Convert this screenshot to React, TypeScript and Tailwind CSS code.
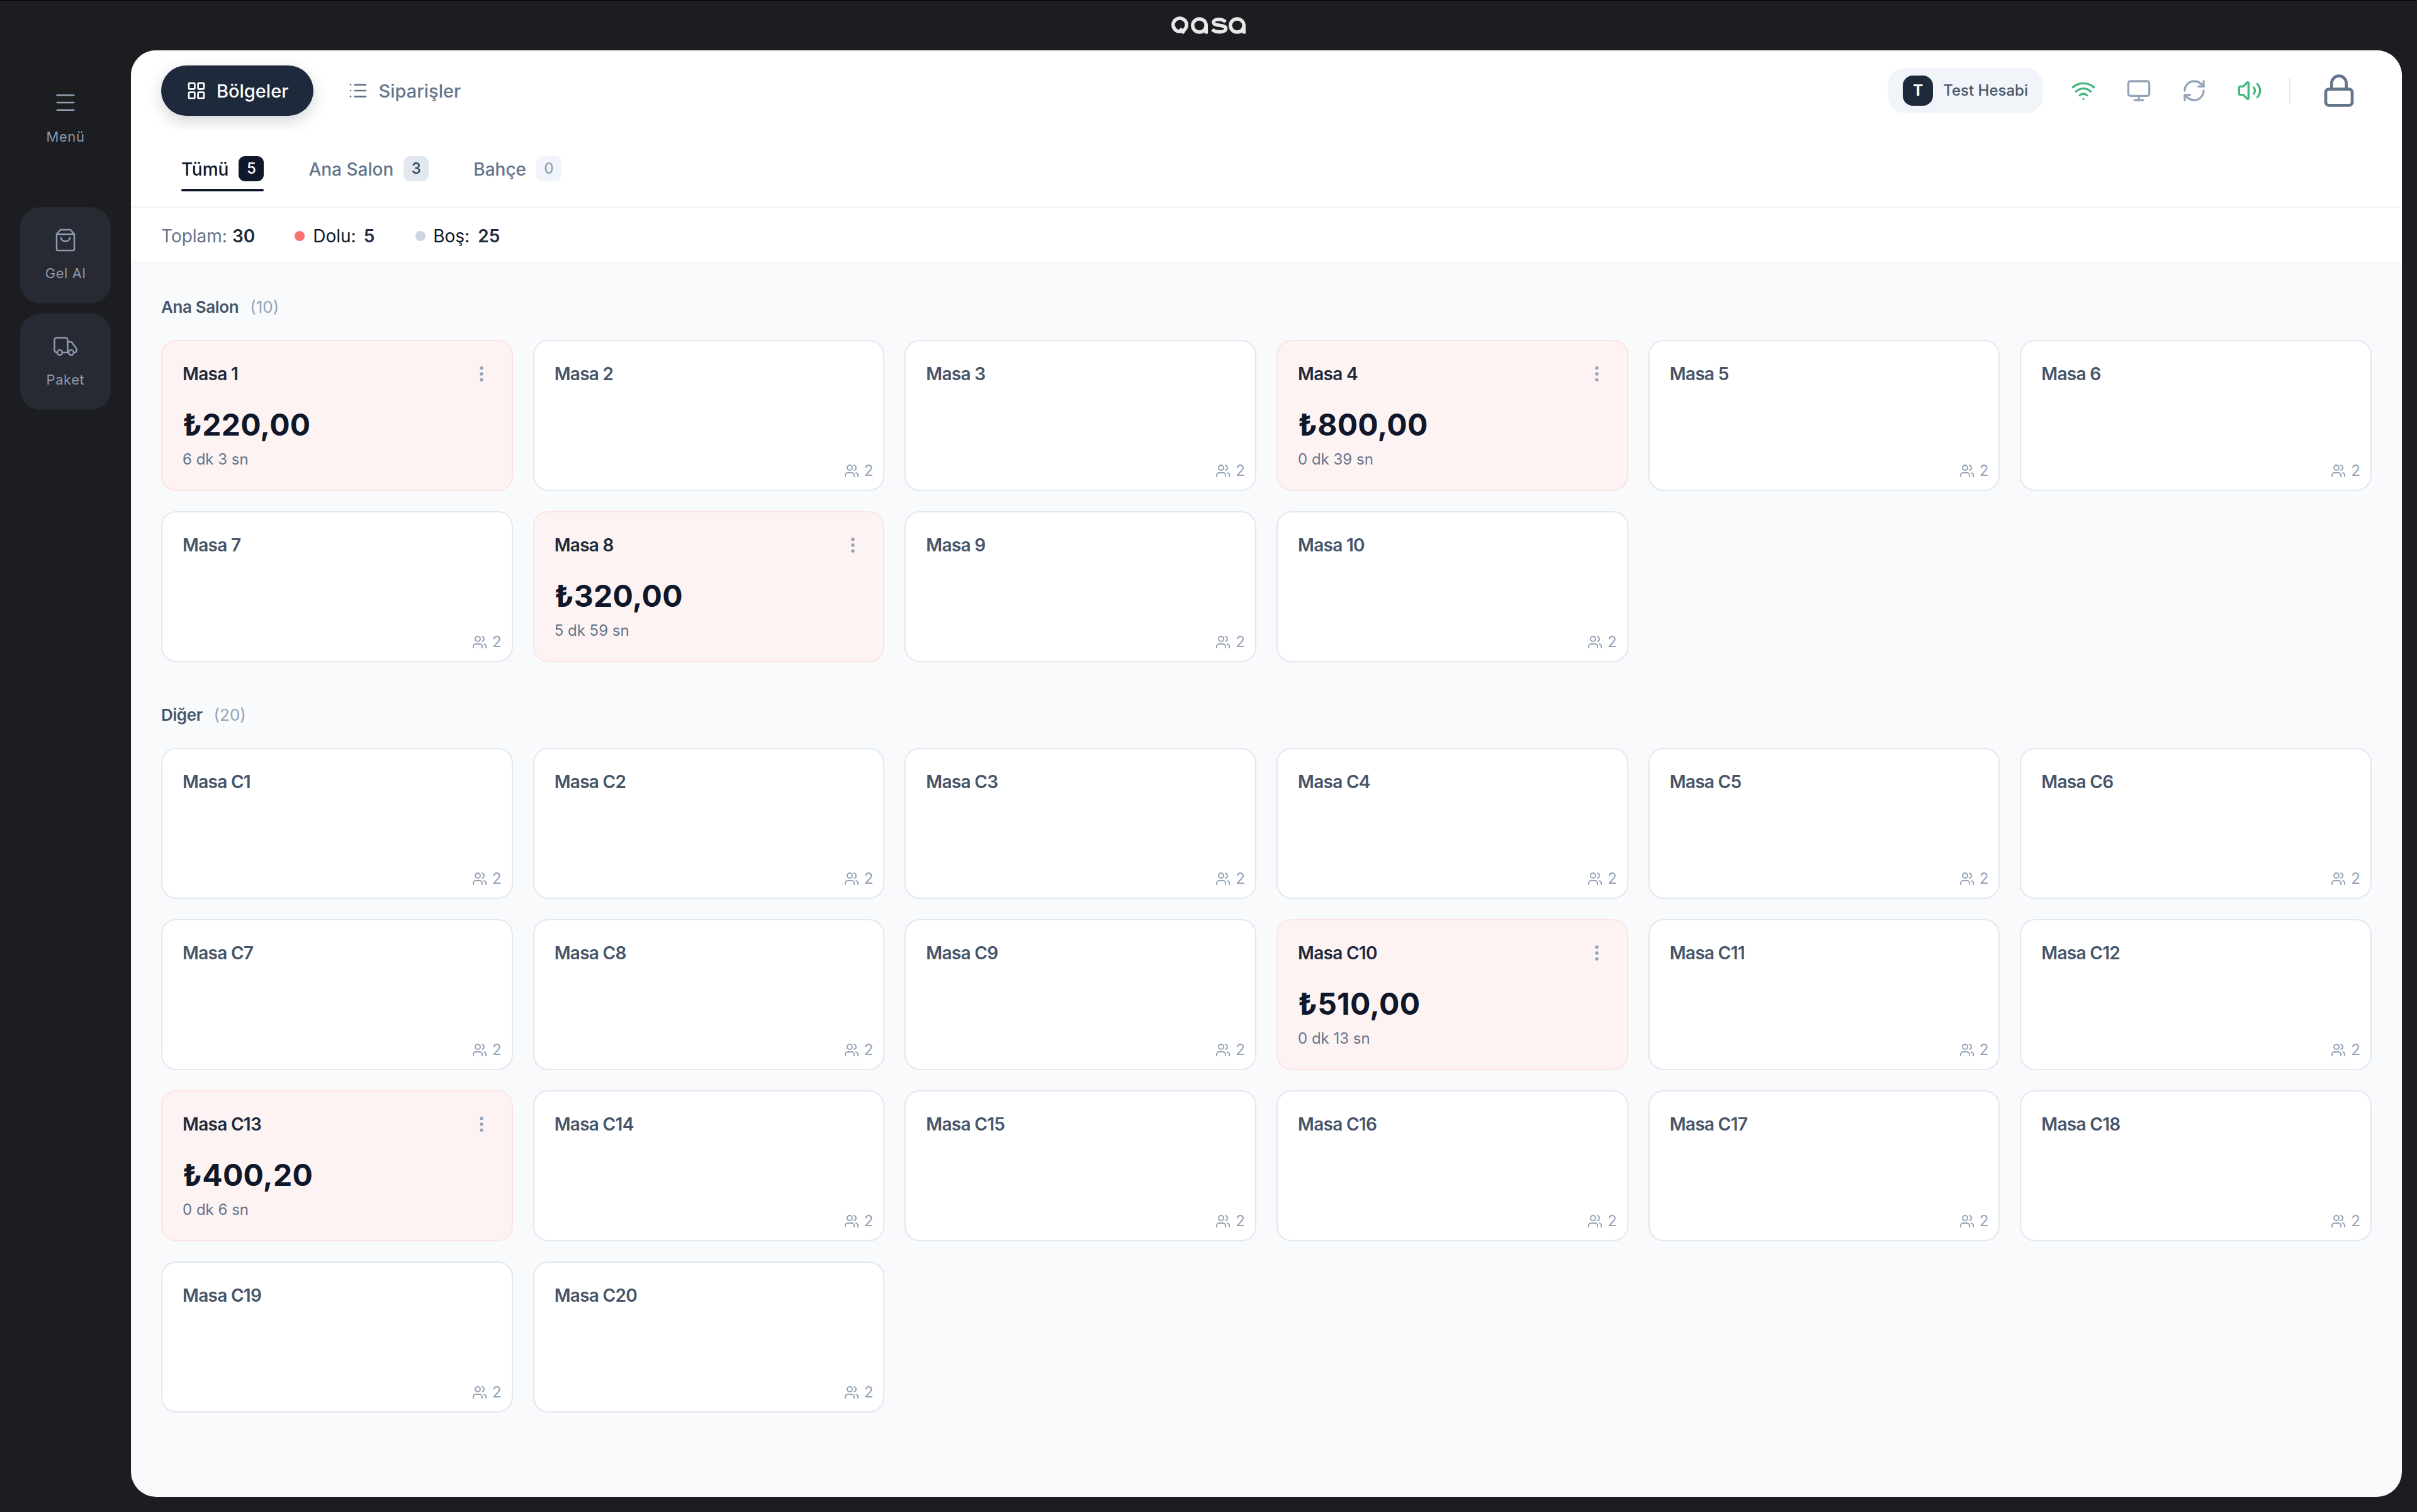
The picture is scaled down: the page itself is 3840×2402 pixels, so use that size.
// App.tsx — Qasa POS table overview screen.

import { LayoutGrid, List, Lock, Menu, Monitor, MoreVertical, RefreshCw, Users, Volume2, Wifi } from "lucide-react";

type Table = { name: string; amount?: string; time?: string };

const mainHall: Table[] = [
  { name: "Masa 1", amount: "₺220,00", time: "6 dk 3 sn" },
  { name: "Masa 2" },
  { name: "Masa 3" },
  { name: "Masa 4", amount: "₺800,00", time: "0 dk 39 sn" },
  { name: "Masa 5" },
  { name: "Masa 6" },
  { name: "Masa 7" },
  { name: "Masa 8", amount: "₺320,00", time: "5 dk 59 sn" },
  { name: "Masa 9" },
  { name: "Masa 10" },
];

const busy: Record<string, Table> = {
  "Masa C10": { name: "Masa C10", amount: "₺510,00", time: "0 dk 13 sn" },
  "Masa C13": { name: "Masa C13", amount: "₺400,20", time: "0 dk 6 sn" },
};

const others: Table[] = Array.from({ length: 20 }, (_, i) => {
  const name = `Masa C${i + 1}`;
  return busy[name] ?? { name };
});

function QasaLogo() {
  return (
    <svg width="118" height="29" viewBox="0 0 118 29" fill="none" stroke="#e8e8e8" strokeWidth="5.500">
      <ellipse cx="13.500" cy="13.500" rx="10.700" ry="10.500" />
      <path d="M13.500 19.500l7 7" />
      <ellipse cx="44.500" cy="14.500" rx="10.700" ry="10.500" />
      <path d="M55.300 13v14.500" />
      <path d="M86 9C81 3.500 67 3.200 67 9.800c0 6 19.500 3 19.500 9.400 0 7.200-15.500 6.800-21.500 1.600" />
      <ellipse cx="104.500" cy="14.500" rx="10.700" ry="10.500" />
      <path d="M115.300 13v14.500" />
    </svg>
  );
}

function BagIcon() {
  return (
    <svg width="34" height="37" viewBox="0 0 34 37" fill="none" stroke="#8c9ab0" strokeWidth="2.500" strokeLinecap="round" strokeLinejoin="round">
      <path d="M9 2h16l6 7v24a2 2 0 0 1-2 2H5a2 2 0 0 1-2-2V9z" />
      <path d="M3 9h28" />
      <path d="M10 15c1 7 13 7 14 0" />
    </svg>
  );
}

function TruckIcon() {
  return (
    <svg width="38" height="31" viewBox="0 0 38 31" fill="none" stroke="#8c9ab0" strokeWidth="2.500" strokeLinecap="round" strokeLinejoin="round">
      <path d="M6 25H5a3.500 3.500 0 0 1-3.500-3.500V5A3.500 3.500 0 0 1 5 1.500h14A3.500 3.500 0 0 1 22.500 5v20" />
      <path d="M22.500 8H27a3 3 0 0 1 2.400 1.200l6 8A3 3 0 0 1 36.500 19v3a3 3 0 0 1-3 3H32" />
      <path d="M14 25h10" />
      <circle cx="10" cy="25" r="4" />
      <circle cx="28" cy="25" r="4" />
    </svg>
  );
}

function SideButton({ label, icon }: { label: string; icon: React.ReactNode }) {
  return (
    <div className="flex h-[153px] w-[144px] flex-col items-center rounded-[32px] bg-[#272a32]">
      <div className="mt-[32px] flex h-[40px] items-center justify-center">{icon}</div>
      <span className="mt-[17px] text-[22px] leading-[32px] tracking-[0.025em] text-[#8c9ab0]">{label}</span>
    </div>
  );
}

function Tab({ label, count, active, tone }: { label: string; count: number; active?: boolean; tone: string }) {
  return (
    <div className="flex flex-col">
      <div className="flex items-center gap-[16px]">
        <span className={`pt-[2px] text-[28px] font-medium leading-[38px] ${active ? "text-[#0f172a]" : "text-[#64748b]"}`}>{label}</span>
        <span className={`flex h-[40px] w-[40px] items-center justify-center rounded-[10px] text-[24px] font-medium ${tone}`}>{count}</span>
      </div>
      <div className={`mt-[12px] h-[4px] rounded-full ${active ? "bg-[#0f172a]" : "bg-transparent"}`} />
    </div>
  );
}

function TableCard({ table }: { table: Table }) {
  if (table.amount) {
    return (
      <div className="flex h-[240px] flex-col rounded-[24px] border-2 border-[#fde4e4] bg-[#fdf3f2] px-[32px]">
        <div className="flex items-center justify-between pt-[34px]">
          <span className="text-[28px] font-semibold leading-[36px] tracking-[-0.025em] text-[#1e293b]">{table.name}</span>
          <MoreVertical size={32} className="text-[#94a3b8]" />
        </div>
        <span className="mt-[33px] text-[48px] font-bold leading-[60px] tracking-[0.005em] text-[#0f172a]">{table.amount}</span>
        <span className="mt-[9px] text-[24px] leading-[32px] text-[#64748b]">{table.time}</span>
      </div>
    );
  }
  return (
    <div className="flex h-[240px] flex-col rounded-[24px] border-2 border-[#e2e8f0] bg-white">
      <span className="px-[32px] pt-[34px] text-[28px] font-semibold leading-[36px] tracking-[-0.025em] text-[#475569]">{table.name}</span>
      <div className="mt-auto flex items-center justify-end gap-[8px] pb-[14px] pr-[16px] text-[24px] leading-[32px] text-[#94a3b8]">
        <Users size={24} />
        <span>2</span>
      </div>
    </div>
  );
}

function Section({ title, count, tables, className }: { title: string; count: number; tables: Table[]; className: string }) {
  return (
    <section className={className}>
      <div className="mb-[32px] flex h-[40px] items-center gap-[18px] text-[26px] leading-[40px]">
        <span className="font-semibold tracking-[-0.015em] text-[#475569]">{title}</span>
        <span className="text-[#94a3b8]">({count})</span>
      </div>
      <div className="grid grid-cols-6 gap-[32px]">
        {tables.map((t) => (
          <TableCard key={t.name} table={t} />
        ))}
      </div>
    </section>
  );
}

export default function App() {
  return (
    <div className="flex h-[2402px] w-[3840px] flex-col overflow-hidden border-t border-black bg-[#1c1d21] font-[Inter,sans-serif]">
      <div className="flex h-[79px] items-center justify-center">
        <QasaLogo />
      </div>
      <div className="flex min-h-0 flex-1">
        <aside className="flex w-[208px] flex-col items-center">
          <Menu size={40} strokeWidth={1.500} className="mt-[63px] text-[#94a3b8]" />
          <span className="mt-[18px] text-[22px] leading-[32px] tracking-[0.025em] text-[#8c9ab0]">Menü</span>
          <div className="mt-[96px] flex flex-col gap-[16px]">
            <SideButton label="Gel Al" icon={<BagIcon />} />
            <SideButton label="Paket" icon={<TruckIcon />} />
          </div>
        </aside>

        <main className="mb-[24px] mr-[24px] flex min-w-0 flex-1 flex-col overflow-hidden rounded-[40px] bg-[#f8fafc]">
          <header className="flex h-[128px] shrink-0 items-center overflow-hidden bg-white pl-[48px] pr-[72px]">
            <div className="flex h-[80px] items-center gap-[16px] rounded-full bg-[#1e293b] px-[40px] text-[29px] font-medium text-white shadow-[0_8px_24px_rgba(15,23,42,0.18)]">
              <LayoutGrid size={32} />
              <span className="pt-[2px]">Bölgeler</span>
            </div>
            <div className="ml-[15px] flex items-center gap-[16px] px-[40px] text-[29px] font-medium text-[#64748b]">
              <List size={32} />
              <span className="pt-[2px]">Siparişler</span>
            </div>
            <div className="ml-auto flex h-[72px] items-center gap-[16px] rounded-[28px] bg-[#f1f5f9] pl-[24px] pr-[24px]">
              <span className="flex h-[48px] w-[48px] items-center justify-center rounded-[16px] bg-[#1e293b] text-[24px] font-bold text-white">T</span>
              <span className="text-[24px] font-medium text-[#475569]">Test Hesabi</span>
            </div>
            <div className="ml-[44px] flex items-center gap-[48px]">
              <Wifi size={40} className="text-[#3fb97c]" />
              <Monitor size={40} className="text-[#94a3b8]" />
              <RefreshCw size={40} className="text-[#94a3b8]" />
              <Volume2 size={40} className="text-[#3fb97c]" />
            </div>
            <div className="ml-[43px] h-[40px] w-[2px] bg-[#e2e8f0]" />
            <Lock size={56} className="ml-[49px] text-[#64748b]" />
          </header>

          <div className="flex shrink-0 gap-[71px] border-b-2 border-[#f1f5f9] bg-white pb-[24px] pl-[80px] pt-[40px]">
            <Tab label="Tümü" count={5} active tone="bg-[#0f172a] text-white" />
            <Tab label="Ana Salon" count={3} tone="bg-[#e2e8f0] text-[#334155]" />
            <Tab label="Bahçe" count={0} tone="bg-[#f1f5f9] text-[#94a3b8]" />
          </div>

          <div className="flex h-[88px] shrink-0 items-center border-b-2 border-[#f1f5f9] bg-white pl-[48px] pt-[3px] text-[28px] text-[#0f172a]">
            <span className="text-[#64748b]">Toplam:</span>
            <span className="ml-[8px] font-semibold text-[#1e293b]">30</span>
            <span className="ml-[63px] h-[16px] w-[16px] rounded-full bg-[#f87171]" />
            <span className="ml-[13px]">Dolu:</span>
            <span className="ml-[12px] font-semibold text-[#1e293b]">5</span>
            <span className="ml-[65px] h-[16px] w-[16px] rounded-full bg-[#cbd5e1]" />
            <span className="ml-[12px]">Boş:</span>
            <span className="ml-[13px] font-semibold text-[#1e293b]">25</span>
          </div>

          <div className="min-h-0 flex-1 px-[48px]">
            <Section title="Ana Salon" count={10} tables={mainHall} className="pt-[50px]" />
            <Section title="Diğer" count={20} tables={others} className="mt-[64px]" />
          </div>
        </main>
      </div>
    </div>
  );
}
